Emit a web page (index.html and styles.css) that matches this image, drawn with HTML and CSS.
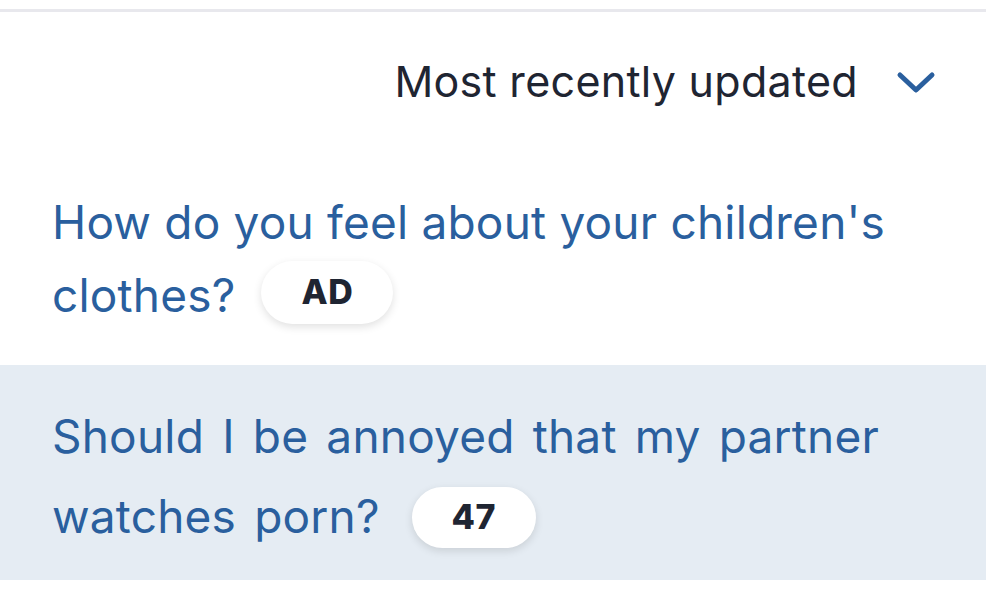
FILE: index.html
```html
<!DOCTYPE html>
<html>
<head>
<meta charset="utf-8">
<link rel="stylesheet" href="styles.css">
</head>
<body>
<div class="topline"></div>
<div class="sort">
  <span class="sort-label">Most recently updated</span>
  <svg class="chev" width="40" height="24" viewBox="0 0 40 24"><path d="M4 4 L20 19 L36 4" fill="none" stroke="#2a5f9e" stroke-width="5" stroke-linecap="round" stroke-linejoin="round"/></svg>
</div>
<ul class="list">
  <li class="item">
    <span class="title">How do you feel about your children's clothes?</span><span class="badge badge-ad">AD</span>
  </li>
  <li class="item item-alt">
    <span class="title">Should I be annoyed that my partner watches porn?</span><span class="badge badge-num">47</span>
  </li>
</ul>
</body>
</html>
```
FILE: styles.css
```css
html, body {
  margin: 0;
  padding: 0;
  background: #ffffff;
  font-family: Inter, "Liberation Sans", sans-serif;
}
.topline {
  margin-top: 9px;
  height: 3px;
  background: #e8e8ed;
}
.sort {
  height: 138px;
  display: flex;
  align-items: center;
  justify-content: flex-end;
  padding-right: 50px;
  gap: 38px;
  box-sizing: border-box;
  padding-bottom: 0;
}
.sort-label {
  font-size: 43px;
  letter-spacing: 0.3px;
  color: #1f2532;
}
.chev {
  display: block;
  margin-top: 4px;
}
.list {
  list-style: none;
  margin: 0;
  padding: 0;
}
.item {
  height: 215px;
  box-sizing: border-box;
  padding: 36px 60px 0 52px;
  font-size: 46px;
  line-height: 73px;
  letter-spacing: 0.2px;
  color: #2a5f9e;
}
.item-alt {
  background: #e5ecf3;
  line-height: 80px;
  padding-top: 31px;
  word-spacing: 5px;
}
.badge {
  display: inline-flex;
  align-items: center;
  justify-content: center;
  vertical-align: middle;
  margin-left: 26px;
  height: 63px;
  border-radius: 32px;
  background: #ffffff;
  box-shadow: 0 3px 8px rgba(0, 0, 0, 0.12);
  color: #1f2532;
  font-weight: 800;
  font-size: 34px;
  letter-spacing: 0.5px;
  word-spacing: 0;
  line-height: 1;
  position: relative;
  top: -7px;
}
.badge-ad {
  width: 132px;
}
.badge-num {
  width: 124px;
  height: 61px;
  top: -3px;
  margin-left: 32px;
}
```
